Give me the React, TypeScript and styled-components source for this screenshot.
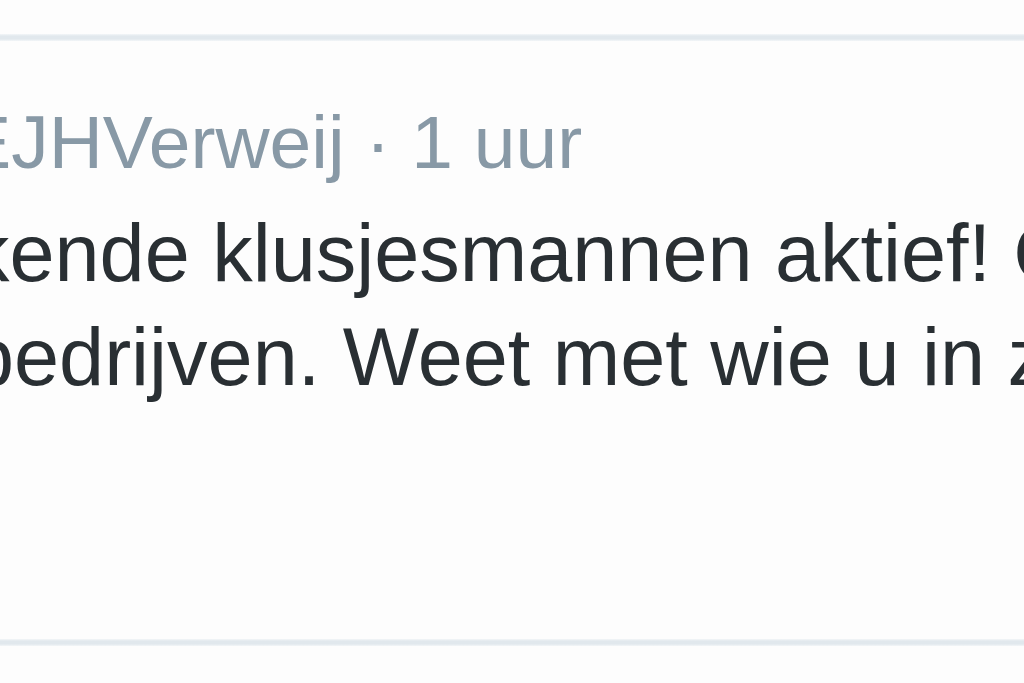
import { FC } from 'react';
import styled, { createGlobalStyle } from 'styled-components';

const GlobalStyle = createGlobalStyle`
  html, body {
    margin: 0;
    padding: 0;
    background: #fdfdfd;
    overflow: hidden;
  }
  body {
    font-family: 'Liberation Sans', Arial, sans-serif;
    -webkit-font-smoothing: antialiased;
  }
`;

const Page = styled.div`
  width: 1024px;
  height: 683px;
  overflow: hidden;
  padding-top: 34px;
  box-sizing: border-box;
`;

const Rule = styled.div`
  height: 7px;
  width: 100%;
  background: linear-gradient(
    to bottom,
    #f3f6f8 0%,
    #e1e8ed 30%,
    #e1e8ed 70%,
    #f3f6f8 100%
  );
`;

const Tweet = styled.div`
  margin-left: -31px;
  padding: 64px 0 230px;
`;

const Meta = styled.div<{ $shift: number }>`
  margin-left: ${(p) => p.$shift}px;
  margin-bottom: 21px;
  font-size: 75px;
  line-height: 75px;
  color: #8899a6;
  white-space: nowrap;
`;

const Text = styled.p`
  margin: 0;
  font-size: 81px;
  line-height: 104px;
  color: #292f33;
`;

const Line = styled.span`
  display: block;
  white-space: nowrap;
`;

const App: FC = () => {
  return (
    <Page>
      <GlobalStyle />
      <Rule />
      <Tweet>
        <Meta $shift={-84}>@EJHVerweij · 1 uur</Meta>
        <Text>
          <Line>kende klusjesmannen aktief! Ook</Line>
          <Line>bedrijven. Weet met wie u in zee gaat</Line>
        </Text>
      </Tweet>
      <Rule />
    </Page>
  );
};

export default App;
